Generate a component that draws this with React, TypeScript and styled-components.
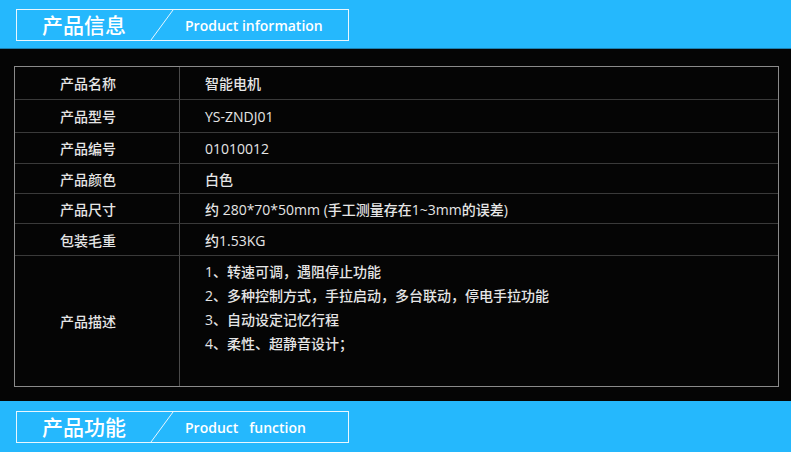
import { createGlobalStyle, styled } from "styled-components";

type Spec = {
    label: string,
    value: string | string[],
    h: number,
}

const GlobalStyle = createGlobalStyle`
    html, body {
        margin: 0;
        padding: 0;
        background: #050505;
    }
    body {
        font-family: "Open Sans", "Noto Sans CJK SC", sans-serif;
    }
`;

const Page = styled.div`
    width: 791px;
    height: 452px;
    display: flex;
    flex-direction: column;
    background: #050505;
    overflow: hidden;
`;

//faixa azul do titulo
const SectionBar = styled.div<{ $bottom?: boolean }>`
    height: ${p => p.$bottom ? "52px" : "49px"};
    box-sizing: border-box;
    background: #25b8fd;
    padding: ${p => p.$bottom ? "10px" : "9px"} 0 0 16px;
    border-bottom: 1px solid ${p => p.$bottom ? "#b9e6fb" : "#1b80b2"};
    flex-shrink: 0;
`;

const HeaderBox = styled.div`
    width: 333px;
    height: 32px;
    box-sizing: border-box;
    border: 1px solid #e9f7ff;
    display: flex;
    align-items: center;
`;

const HeaderTitle = styled.span`
    font-family: "Noto Sans CJK SC", sans-serif;
    font-size: 21px;
    font-weight: 500;
    color: #fff;
    margin-left: 25px;
    line-height: 1;
    width: 84px;
    margin-top: -2px;
`;

const Slash = styled.svg`
    width: 24px;
    height: 30px;
    margin-left: 24px;
    display: block;
`;

const HeaderSub = styled.span`
    font-family: "Open Sans", sans-serif;
    font-size: 14px;
    font-weight: 600;
    color: #fff;
    margin-left: 11px;
    white-space: pre;
    padding-top: 1px;
`;

const Body = styled.div`
    flex: 1;
    padding: 17px 12px 14px 14px;
`;

const Table = styled.div`
    border: 1px solid #8a8a8a;
    display: grid;
    grid-template-columns: 165px 1fr;
`;

const Cell = styled.div<{ $h: number, $label?: boolean, $last?: boolean }>`
    height: ${p => p.$h}px;
    box-sizing: border-box;
    display: flex;
    align-items: center;
    font-size: 14px;
    font-weight: 500;
    color: #e6e6e6;
    border-bottom: ${p => p.$last ? "none" : "1px solid #3a3a3a"};
    border-right: ${p => p.$label ? "1px solid #4a4a4a" : "none"};
    padding-left: ${p => p.$label ? "45px" : "25px"};
    font-family: ${p => p.$label ? `"Noto Sans CJK SC", sans-serif` : `"Open Sans", "Noto Sans CJK SC", sans-serif`};
`;

const LineList = styled.div`
    align-self: flex-start;
    padding-top: 4px;
    line-height: 24px;
`;

const rows: Spec[] = [
    { label: "产品名称", value: "智能电机", h: 33 },
    { label: "产品型号", value: "YS-ZNDJ01", h: 33 },
    { label: "产品编号", value: "01010012", h: 31 },
    { label: "产品颜色", value: "白色", h: 30 },
    { label: "产品尺寸", value: "约 280*70*50mm (手工测量存在1~3mm的误差)", h: 30 },
    { label: "包装毛重", value: "约1.53KG", h: 32 },
    {
        label: "产品描述",
        value: [
            "1、转速可调，遇阻停止功能",
            "2、多种控制方式，手拉启动，多台联动，停电手拉功能",
            "3、自动设定记忆行程",
            "4、柔性、超静音设计；",
        ],
        h: 130,
    },
];

const Header = ({ title, sub, bottom }: { title: string, sub: string, bottom?: boolean }) => (
    <SectionBar $bottom={bottom}>
        <HeaderBox>
            <HeaderTitle>{title}</HeaderTitle>
            <Slash viewBox="0 0 24 30">
                <line x1="1" y1="30" x2="23" y2="0" stroke="#e9f7ff" strokeWidth="1" />
            </Slash>
            <HeaderSub>{sub}</HeaderSub>
        </HeaderBox>
    </SectionBar>
);

export default function App() {
    return (
        <Page>
            <GlobalStyle />
            <Header title="产品信息" sub="Product information" />
            <Body>
                <Table>
                    {rows.map((r, i) => {
                        const last = i === rows.length - 1;
                        return [
                            <Cell key={r.label + "l"} $h={r.h} $label $last={last}>{r.label}</Cell>,
                            <Cell key={r.label + "v"} $h={r.h} $last={last}>
                                {Array.isArray(r.value)
                                    ? <LineList>{r.value.map(t => <div key={t}>{t}</div>)}</LineList>
                                    : r.value}
                            </Cell>,
                        ];
                    })}
                </Table>
            </Body>
            <Header title="产品功能" sub={"Product   function"} bottom />
        </Page>
    );
}
